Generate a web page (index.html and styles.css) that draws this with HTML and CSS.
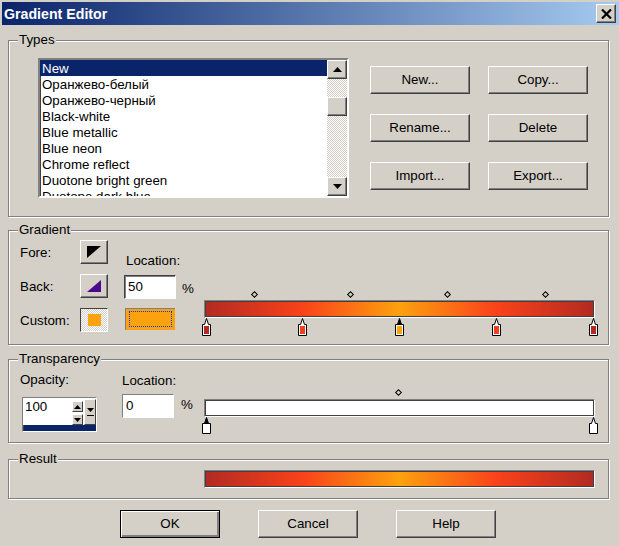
FILE: index.html
```html
<!DOCTYPE html>
<html lang="en">
<head>
<meta charset="utf-8">
<title>Gradient Editor</title>
<link rel="stylesheet" href="styles.css">
</head>
<body>
<div class="window">
  <header class="titlebar">
    <span class="title">Gradient Editor</span>
    <button class="close" aria-label="Close"><svg width="11" height="10" viewBox="0 0 11 10"><path d="M1 0.5 L10 9.5 M10 0.5 L1 9.5" stroke="#000" stroke-width="2.2" fill="none"/></svg></button>
  </header>
  <main class="content">
    <section class="group types">
      <span class="legend">Types</span>
      <div class="listbox">
        <ul class="items">
          <li class="selected">New</li>
          <li>Оранжево-белый</li>
          <li>Оранжево-черный</li>
          <li>Black-white</li>
          <li>Blue metallic</li>
          <li>Blue neon</li>
          <li>Chrome reflect</li>
          <li>Duotone bright green</li>
          <li>Duotone dark blue</li>
        </ul>
        <div class="scrollbar">
          <span class="sb-btn"><svg width="9" height="5" viewBox="0 0 9 5"><path d="M4.5 0 L9 5 H0 Z"/></svg></span>
          <span class="sb-thumb"></span>
          <span class="sb-btn"><svg width="9" height="5" viewBox="0 0 9 5"><path d="M0 0 H9 L4.5 5 Z"/></svg></span>
        </div>
      </div>
      <div class="actions">
        <button class="btn">New...</button>
        <button class="btn">Copy...</button>
        <button class="btn">Rename...</button>
        <button class="btn">Delete</button>
        <button class="btn">Import...</button>
        <button class="btn">Export...</button>
      </div>
    </section>

    <section class="group gradient">
      <span class="legend">Gradient</span>
      <div class="colors">
        <span class="lbl">Fore:</span>
        <button class="btn tool"><svg width="14" height="12" viewBox="0 0 14 12"><path d="M0 0 H14 L0 12 Z" fill="#000"/></svg></button>
        <span class="lbl">Back:</span>
        <button class="btn tool"><svg width="14" height="12" viewBox="0 0 14 12"><path d="M14 0 V12 H0 Z" fill="#4b0a8c"/></svg></button>
        <span class="lbl">Custom:</span>
        <span class="well"><span class="well-fill"></span></span>
      </div>
      <div class="location">
        <span class="lbl">Location:</span>
        <div class="field-row"><span class="field">50</span><span class="pct">%</span></div>
        <span class="swatch"><span class="swatch-focus"></span></span>
      </div>
      <div class="track">
        <i class="diamond" style="left:48px"></i>
        <i class="diamond" style="left:144px"></i>
        <i class="diamond" style="left:241px"></i>
        <i class="diamond" style="left:339px"></i>
        <div class="bar fire"></div>
        <svg class="stop" style="left:-2px" width="9" height="18" viewBox="0 0 9 18"><path d="M4.5 .5 L6.5 6.5 H8.5 V17.5 H.5 V6.5 H2.5 Z" fill="#fff" stroke="#000"/><rect x="2" y="8" width="5" height="8" fill="#b22a22"/></svg>
        <svg class="stop" style="left:94px" width="9" height="18" viewBox="0 0 9 18"><path d="M4.5 .5 L6.5 6.5 H8.5 V17.5 H.5 V6.5 H2.5 Z" fill="#fff" stroke="#000"/><rect x="2" y="8" width="5" height="8" fill="#f0401a"/></svg>
        <svg class="stop" style="left:191px" width="9" height="18" viewBox="0 0 9 18"><path d="M4.5 .5 L6.5 6.5 H2.5 Z" fill="#000" stroke="#000"/><path d="M.5 6.5 H8.5 V17.5 H.5 Z" fill="#fff" stroke="#000"/><rect x="2" y="8" width="5" height="8" fill="#fca10f"/></svg>
        <svg class="stop" style="left:288px" width="9" height="18" viewBox="0 0 9 18"><path d="M4.5 .5 L6.5 6.5 H8.5 V17.5 H.5 V6.5 H2.5 Z" fill="#fff" stroke="#000"/><rect x="2" y="8" width="5" height="8" fill="#f0401a"/></svg>
        <svg class="stop" style="left:385px" width="9" height="18" viewBox="0 0 9 18"><path d="M4.5 .5 L6.5 6.5 H8.5 V17.5 H.5 V6.5 H2.5 Z" fill="#fff" stroke="#000"/><rect x="2" y="8" width="5" height="8" fill="#b22a22"/></svg>
      </div>
    </section>

    <section class="group transparency">
      <span class="legend">Transparency</span>
      <div class="opacity">
        <span class="lbl">Opacity:</span>
        <div class="spin">
          <div class="spin-main">
            <span class="spin-value">100</span>
            <span class="spin-arrows">
              <span class="spin-btn"><svg width="7" height="4" viewBox="0 0 7 4"><path d="M3.5 0 L7 4 H0 Z"/></svg></span>
              <span class="spin-btn"><svg width="7" height="4" viewBox="0 0 7 4"><path d="M0 0 H7 L3.5 4 Z"/></svg></span>
            </span>
            <span class="spin-drop"><svg width="7" height="9" viewBox="0 0 7 9"><path d="M0 0 H7 L3.5 4 Z M0 7 H7 V8 H0 Z"/></svg></span>
          </div>
          <div class="spin-stripe"></div>
        </div>
      </div>
      <div class="location narrow">
        <span class="lbl">Location:</span>
        <div class="field-row"><span class="field flat">0</span><span class="pct">%</span></div>
      </div>
      <div class="track alpha">
        <i class="diamond" style="left:192px"></i>
        <div class="bar blank"></div>
        <svg class="stop" style="left:-2px" width="9" height="17" viewBox="0 0 9 17"><path d="M4.5 .5 L6.5 6.5 H2.5 Z" fill="#000" stroke="#000"/><path d="M.5 6.5 H8.5 V16.5 H.5 Z" fill="#fff" stroke="#000"/></svg>
        <svg class="stop" style="left:385px" width="9" height="17" viewBox="0 0 9 17"><path d="M4.5 .5 L6.5 6.5 H8.5 V16.5 H.5 V6.5 H2.5 Z" fill="#fff" stroke="#000"/></svg>
      </div>
    </section>

    <section class="group result">
      <span class="legend">Result</span>
      <div class="bar fire"></div>
    </section>

    <footer class="footer">
      <button class="btn default">OK</button>
      <button class="btn">Cancel</button>
      <button class="btn">Help</button>
    </footer>
  </main>
</div>
</body>
</html>
```
FILE: styles.css
```css
* { box-sizing: border-box; }
html, body { margin: 0; padding: 0; }
body { background: #d4d0c8; font: 13.33px/16px "Liberation Sans", Arial, sans-serif; color: #000; }
.window { width: 619px; height: 546px; overflow: hidden; padding: 2px 0 0 2px; background: #d4d0c8; }
.titlebar {
  height: 23px; display: flex; align-items: center; justify-content: space-between;
  padding: 0 3px 0 2px;
  background: linear-gradient(90deg, #0a246a, #a6caf0);
}
.title { color: #fff; font-weight: 700; font-size: 14.2px; }
.close {
  width: 20px; height: 19px; padding: 0; display: flex; align-items: center; justify-content: center;
  background: #d4d0c8; border: 1px solid; border-color: #fff #404040 #404040 #fff;
  box-shadow: inset -1px -1px 0 #808080;
}
.content { padding: 15px 8px 0 6px; }
.group {
  position: relative; width: 601px; display: flex;
  border: 1px solid #808080;
  box-shadow: 1px 1px 0 #fff, inset 1px 1px 0 #fff;
}
.legend { position: absolute; left: 9px; top: -9px; padding: 0 1px; background: #d4d0c8; line-height: 15px; }
.lbl { display: block; line-height: 16px; }
.btn {
  width: 100px; height: 28px; padding: 0; background: #d4d0c8; font: inherit; color: #000;
  border: 1px solid; border-color: #fff #404040 #404040 #fff;
  box-shadow: inset -1px -1px 0 #808080;
}
.btn.default { border: 1px solid #000; box-shadow: inset 1px 1px 0 #fff, inset -2px -2px 0 #808080; }

/* Types */
.types { height: 177px; margin-bottom: 13px; padding: 17px 0 0 29px; }
.listbox {
  width: 311px; height: 140px; display: flex; background: #fff;
  border: 2px solid; border-color: #808080 #fff #fff #808080;
  box-shadow: inset 1px 1px 0 #404040;
}
.items { flex: 1; margin: 0; padding: 0; list-style: none; overflow: hidden; }
.items li { height: 16px; padding: 1px 0 0 2px; white-space: nowrap; }
.items .selected { background: #0a246a; color: #fff; }
.scrollbar {
  width: 20px; display: flex; flex-direction: column;
  background: repeating-conic-gradient(#d4d0c8 0 25%, #fff 0 50%) 0 0 / 2px 2px;
}
.sb-btn, .sb-thumb {
  display: flex; align-items: center; justify-content: center; flex: none; height: 19px; background: #d4d0c8;
  border: 1px solid; border-color: #fff #404040 #404040 #fff;
  box-shadow: inset -1px -1px 0 #808080;
}
.sb-thumb { margin: 18px 0 auto; }
.actions { display: grid; grid-template-columns: 100px 100px; grid-auto-rows: 28px; gap: 20px 18px; margin: 8px 0 0 21px; }

/* Gradient */
.gradient { height: 115px; margin-bottom: 14px; }
.colors { display: grid; grid-template-columns: 60px 28px; grid-auto-rows: 24px; row-gap: 10px; align-items: center; margin: 9px 0 0 11px; height: 92px; }
.colors .lbl { padding-top: 2px; height: 18px; }
.tool { width: 28px; height: 24px; display: flex; align-items: center; justify-content: center; }
.well {
  width: 28px; height: 24px; display: flex; align-items: center; justify-content: center;
  border: 1px solid; border-color: #404040 #fff #fff #404040;
  background: repeating-conic-gradient(#d4d0c8 0 25%, #fff 0 50%) 0 0 / 2px 2px;
}
.well-fill { width: 13px; height: 12px; background: #fca10f; }
.location { width: 80px; margin: 22px 0 0 16px; }
.location .lbl { margin-left: 2px; }
.field-row { display: flex; align-items: center; margin-top: 6px; }
.field {
  width: 52px; height: 24px; padding: 3px 0 0 3px; background: #fff;
  border: 1px solid; border-color: #404040 #fff #fff #404040;
  box-shadow: inset 1px 1px 0 #808080;
}
.pct { margin-left: 6px; padding-top: 4px; }
.swatch { display: block; width: 50px; height: 22px; margin: 9px 0 0 1px; padding: 2px 3px 3px; background: #fca10f; border-left: 1px solid #808080; border-top: 1px solid #808080; }
.swatch-focus { display: block; height: 100%; border: 1px dotted #0a3cc8; }
.track { position: relative; width: 391px; height: 18px; margin: 69px 0 0 0; }
.bar {
  width: 391px; height: 18px;
  border: 1px solid; border-color: #808080 #fff #fff #808080;
  box-shadow: inset 1px 1px 0 #404040, inset -1px -1px 0 #404040;
}
.fire { background: linear-gradient(90deg, #b22a22, #f9421a 25%, #fca10f 50%, #f9421a 75%, #b22a22) padding-box; }
.blank { background: #fff; }
.diamond {
  position: absolute; top: -8px; width: 5px; height: 5px; background: #d4d0c8;
  border: 1px solid #000; transform: rotate(45deg);
}
.stop { position: absolute; top: 18px; display: block; }

/* Transparency */
.transparency { height: 84px; margin-bottom: 16px; }
.opacity { margin: 12px 0 0 11px; width: 79px; }
.spin {
  width: 75px; height: 35px; margin: 9px 0 0 2px; display: flex; flex-direction: column;
  border: 1px solid; border-color: #808080 #fff #fff #808080;
  box-shadow: inset 1px 1px 0 #404040;
}
.spin-main { flex: 1; display: flex; padding: 1px 0 0 1px; background: #fff; }
.spin-value { width: 49px; padding-left: 1px; }
.spin-arrows { width: 11px; display: flex; flex-direction: column; gap: 2px; padding-top: 2px; }
.spin-btn, .spin-drop {
  display: flex; align-items: center; justify-content: center; background: #d4d0c8;
  border: 1px solid; border-color: #fff #404040 #404040 #fff;
}
.spin-btn { height: 11px; }
.spin-drop { width: 12px; margin-left: 1px; }
.spin-stripe { height: 6px; margin-left: 1px; background: #0a246a; }
.narrow { width: 82px; margin: 13px 0 0 23px; }
.narrow .lbl { margin-left: 0; }
.narrow .field-row { margin-top: 5px; }
.narrow .pct { margin-left: 7px; padding: 0 0 2px; }
.flat { box-shadow: none; border-color: #808080 #fff #fff #808080; }
.alpha { margin: 39px 0 0 0; }
.alpha .diamond { top: -9px; }

/* Result */
.result { height: 40px; padding: 10px 0 0 195px; margin-bottom: 11px; }

/* Footer */
.footer { display: flex; gap: 38px; padding-left: 112px; }
```
